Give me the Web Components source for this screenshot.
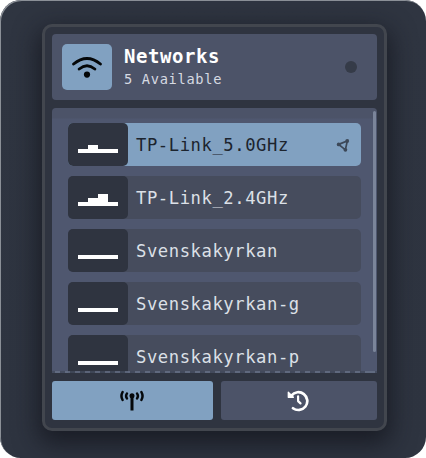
<!DOCTYPE html>
<html lang="en"><head><meta charset="utf-8"><title>Networks</title>
<style>
html,body{margin:0;background:#fff;height:100%;overflow:hidden;font-family:"DejaVu Sans Mono","Liberation Mono",monospace}
</style></head><body>
<network-window>
<network-header slot="header"><span slot="title">Networks</span><span slot="count">5 Available</span></network-header>
<network-list slot="list">
<network-row active levels="0,1,0,0">TP-Link_5.0GHz</network-row>
<network-row levels="0,1,2,0">TP-Link_2.4GHz</network-row>
<network-row levels="0,0,0,0">Svenskakyrkan</network-row>
<network-row levels="0,0,0,0">Svenskakyrkan-g</network-row>
<network-row levels="0,0,0,0">Svenskakyrkan-p</network-row>
</network-list>
<network-tab slot="tabs" active>
<svg width="24" height="22" viewBox="0 0 24 22" fill="none" stroke="#05080b" stroke-width="2.5" stroke-linecap="round"><path d="M2.6 2Q.3 6 2.6 10M6.9 3.6Q5.3 6 6.9 8.4M21.4 2Q23.7 6 21.4 10M17.1 3.6Q18.7 6 17.1 8.4"/><path d="M12 6V20.5" stroke-width="3" stroke-linecap="butt"/><circle cx="12" cy="5.8" r="2.5" fill="#05080b" stroke="none"/></svg>
</network-tab>
<network-tab slot="tabs">
<svg width="22" height="22" viewBox="0 0 22 22" fill="none" stroke="#fff" stroke-width="2.7" stroke-linecap="round" stroke-linejoin="round"><path d="M4.4 5.6A8.9 8.9 0 1 1 6 18.2"/><path d="M1.3 2.2V7.3H6.4Z" fill="#fff" stroke-width="1.3"/><path d="M11.1 6.4V11.1L13.5 13.4" stroke-width="2.2"/></svg>
</network-tab>
</network-window>
<script>
const define=(name,html,setup)=>customElements.define(name,class extends HTMLElement{
  constructor(){super();this.attachShadow({mode:'open'}).innerHTML=html;}
  connectedCallback(){if(setup)setup(this);}
});

define('network-window',`<style>
:host{display:block;box-sizing:border-box;width:426px;height:458px;padding:24px 39px 27px 42px;border-radius:21px;background:linear-gradient(180deg,#2f3541,#2e3440);box-shadow:inset 1px 1px 0 #8b9097;overflow:hidden}
.panel{box-sizing:border-box;width:345px;height:406.5px;border:3px solid #42464e;border-radius:10px;background:#2f3440;padding:7px;display:flex;flex-direction:column;gap:8px;box-shadow:0 9px 24px 4px rgba(16,17,25,.68)}
.tabs{display:grid;grid-template-columns:160.5px 1fr;gap:8px;height:39px}
</style><div class="panel"><slot name="header"></slot><slot name="list"></slot><div class="tabs"><slot name="tabs"></slot></div></div>`);

define('network-header',`<style>
:host{display:flex;box-sizing:border-box;height:66px;flex:none;padding:10px 20px 10px 10px;border-radius:4px;background:#4c5368;align-items:center}
.tile{width:50px;height:46px;border-radius:5px;background:#81a1c1;display:grid;place-items:center}
.text{margin-left:12px;flex:1;white-space:nowrap}
.t{font-weight:700;font-size:19px;letter-spacing:.55px;line-height:24px;color:#fff}
.c{font-size:13.7px;letter-spacing:.68px;line-height:21px;color:#d6dae2;margin-top:1px}
.dot{width:12px;height:12px;border-radius:50%;background:#353b48}
</style><div class="tile"><svg width="32" height="24" viewBox="0 0 32 24" fill="none" stroke="#050708" stroke-width="2.9" stroke-linecap="round"><path d="M2.6 9Q16-2.2 29.4 9M8.2 14Q16 7.6 23.8 14"/><circle cx="16" cy="19.6" r="3.1" fill="#050708" stroke="none"/></svg></div>
<div class="text"><div class="t"><slot name="title"></slot></div><div class="c"><slot name="count"></slot></div></div><div class="dot"></div>`);

define('network-list',`<style>
:host{display:block;position:relative;box-sizing:border-box;height:265px;flex:none;border-radius:4px 4px 0 0;background:linear-gradient(#4c5368 0,#4c5368 10px,#4f576f 11px);overflow:hidden}
.rows{display:flex;flex-direction:column;gap:10px;padding:15px 16px 0}
.bar{position:absolute;right:1px;top:3px;width:3px;height:241px;border-radius:2px;background:#7b859a}
.edge{position:absolute;left:0;right:0;bottom:0;height:2px;background:repeating-linear-gradient(90deg,#667086 0 5px,#424a5c 5px 10px);background-position:-7px 0;opacity:.8}
</style><div class="rows"><slot></slot></div><div class="bar"></div><div class="edge"></div>`);

define('network-row',`<style>
:host{display:flex;height:43px;flex:none;border-radius:5px;background:#464c5d;color:#dce0e7;align-items:center}
:host([active]){background:#81a1c1;color:#1c242e}
.badge{box-sizing:border-box;width:60px;height:43px;border-radius:5px;background:#2f3440;display:flex;align-items:flex-end;padding:0 10px 13.4px}
.badge i{flex:1;background:#fff}
.name{flex:1;margin-left:8px;font-size:17.2px;letter-spacing:.57px;line-height:24px;white-space:nowrap}
svg{display:none;margin-right:11px}:host([active]) svg{display:block}
</style><div class="badge"></div><div class="name"><slot></slot></div>
<svg width="14" height="14" viewBox="0 0 14 14" fill="none" stroke="#3c4858" stroke-width="1.7"><path d="M2.7 6.4L11.3 3L9.4 11.8Z"/><g fill="#3c4858" stroke="none"><circle cx="2.7" cy="6.4" r="1.9"/><circle cx="11.2" cy="3" r="1.9"/><circle cx="9.4" cy="11.8" r="1.9"/></g></svg>`,
el=>{el.shadowRoot.querySelector('.badge').innerHTML=el.getAttribute('levels').split(',').map(v=>`<i style="height:${4+v*4}px"></i>`).join('');});

define('network-tab',`<style>
:host{display:grid;place-items:center;height:39px;border-radius:3px;background:#4c5368}
:host([active]){background:#81a1c1}
::slotted(svg){display:block;margin-left:-1px}
</style><slot></slot>`);
</script></body></html>
